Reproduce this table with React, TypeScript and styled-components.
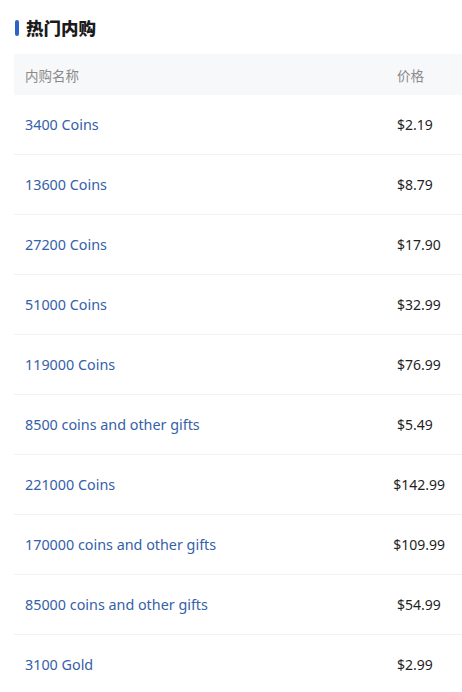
import React from "react";
import styled, { createGlobalStyle } from "styled-components";

const Global = createGlobalStyle`
  html, body { margin: 0; padding: 0; background: #ffffff; }
  body { font-family: "Noto Sans", "Noto Sans CJK SC", sans-serif; }
`;

const Page = styled.div`
  padding: 18px 0 0 14px;
  width: 462px;
  box-sizing: border-box;
  overflow: hidden;
`;

const TitleRow = styled.div`
  display: flex;
  align-items: center;
  gap: 7px;
  height: 20px;
  padding-left: 1px;
`;

const TitleBar = styled.span`
  width: 4px;
  height: 16px;
  border-radius: 2px;
  background: #2f62c9;
`;

const Title = styled.h2`
  margin: 0;
  font-family: "Noto Sans CJK SC", sans-serif;
  font-size: 17.5px;
  font-weight: 900;
  color: #1b1b1b;
  line-height: 20px;
`;

const Table = styled.div`
  margin-top: 16px;
  display: flex;
  flex-direction: column;
`;

const Row = styled.div<{ $head?: boolean }>`
  display: flex;
  align-items: center;
  height: ${(p) => (p.$head ? "41px" : "60px")};
  box-sizing: border-box;
  background: ${(p) => (p.$head ? "#f7f8fa" : "#ffffff")};
  border-bottom: ${(p) => (p.$head ? "none" : "1px solid #f1f2f4")};
  padding: 0 17px 0 11px;
  font-size: 14px;
`;

const NameCell = styled.div<{ $head?: boolean }>`
  flex: 1;
  color: ${(p) => (p.$head ? "#8a8a8a" : "#3561a8")};
  font-family: ${(p) =>
    p.$head ? `"Noto Sans CJK SC", sans-serif` : `"Noto Sans", "Noto Sans CJK SC", sans-serif`};
  font-size: ${(p) => (p.$head ? "13.5px" : "14.35px")};
  white-space: nowrap;
`;

const PriceCell = styled.div<{ $head?: boolean }>`
  flex: none;
  min-width: 48px;
  color: ${(p) => (p.$head ? "#8a8a8a" : "#1f1f1f")};
  font-family: ${(p) =>
    p.$head ? `"Noto Sans CJK SC", sans-serif` : `"Noto Sans", sans-serif`};
  font-size: ${(p) => (p.$head ? "13.5px" : "14px")};
  white-space: nowrap;
  padding-left: ${(p) => (p.$head ? "0" : "1px")};
`;

const items: [string, string][] = [
  ["3400 Coins", "$2.19"],
  ["13600 Coins", "$8.79"],
  ["27200 Coins", "$17.90"],
  ["51000 Coins", "$32.99"],
  ["119000 Coins", "$76.99"],
  ["8500 coins and other gifts", "$5.49"],
  ["221000 Coins", "$142.99"],
  ["170000 coins and other gifts", "$109.99"],
  ["85000 coins and other gifts", "$54.99"],
  ["3100 Gold", "$2.99"],
];

export default function App() {
  return (
    <>
      <Global />
      <Page>
        <TitleRow>
          <TitleBar />
          <Title>热门内购</Title>
        </TitleRow>
        <Table>
          <Row $head>
            <NameCell $head>内购名称</NameCell>
            <PriceCell $head>价格</PriceCell>
          </Row>
          {items.map(([n, p]) => (
            <Row key={n}>
              <NameCell>{n}</NameCell>
              <PriceCell>{p}</PriceCell>
            </Row>
          ))}
        </Table>
      </Page>
    </>
  );
}
